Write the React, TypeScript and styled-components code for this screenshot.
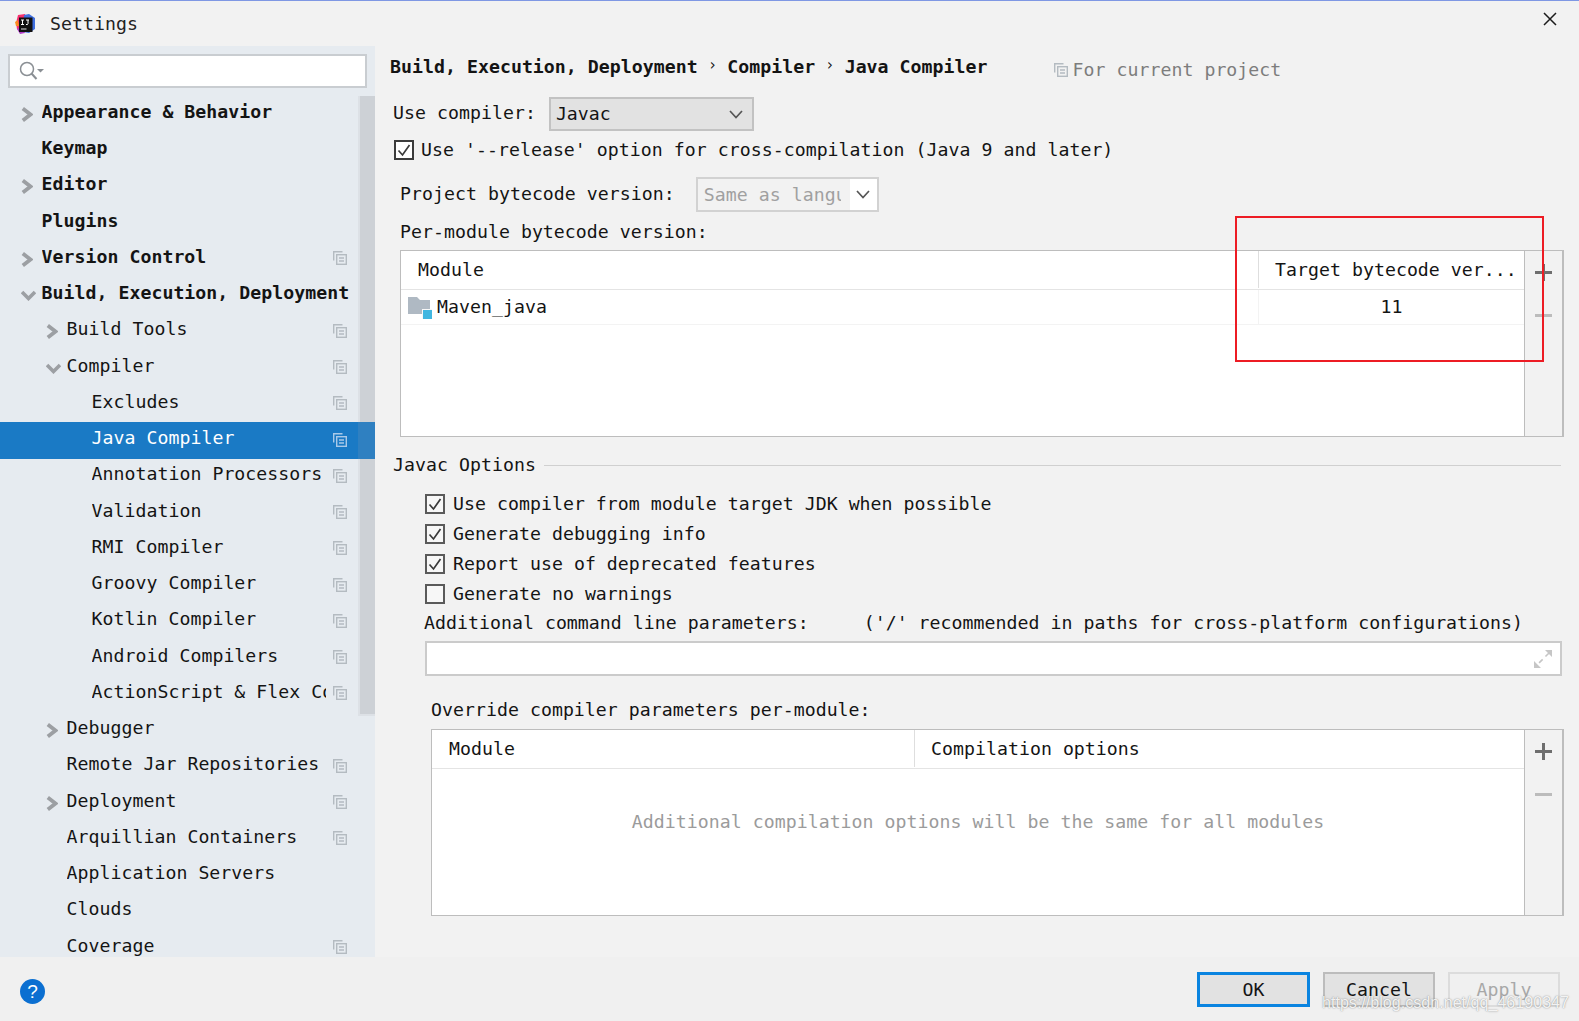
import React from 'react';
import styled, { createGlobalStyle } from 'styled-components';

const Global = createGlobalStyle`
    html, body {
        margin: 0;
        padding: 0;
        background: #f2f2f2;
    }
    * {
        box-sizing: border-box;
    }
`;

const Window = styled.div`
    position: relative;
    width: 1579px;
    height: 1021px;
    display: flex;
    flex-direction: column;
    overflow: hidden;
    background: #f2f2f2;
    color: #141414;
    font-family: "DejaVu Sans Mono", "Liberation Mono", monospace;
    font-size: 18.2px;
    line-height: 20px;
    letter-spacing: 0.04px;
    white-space: pre;
`;

const TitleBar = styled.div`
    height: 46px;
    flex: none;
    display: flex;
    align-items: center;
    border-top: 1px solid #7f98e4;
    padding: 0 22px 0 15px;
`;

const Title = styled.div`
    margin-left: 15px;
    flex: 1;
    color: #222;
`;

const Body = styled.div`
    flex: 1;
    display: flex;
    min-height: 0;
`;

const Sidebar = styled.div`
    width: 375px;
    flex: none;
    display: flex;
    flex-direction: column;
    background: #e6ebf0;
    overflow: hidden;
`;

const SearchBox = styled.div`
    margin: 8px 8px 8px;
    width: 359px;
    height: 34px;
    flex: none;
    display: flex;
    align-items: center;
    padding-left: 9px;
    background: #fff;
    border: 2px solid #c9cdd1;
`;

const Tree = styled.div`
    position: relative;
    flex: 1;
    min-height: 0;
`;

const ScrollThumb = styled.div`
    position: absolute;
    top: 0;
    left: 358px;
    width: 17px;
    height: 620px;
    background: #cdd1d6;
    border-left: 2px solid #dde1e6;
    border-bottom: 2px solid #dde1e6;
`;

const Row = styled.div<{ $level: number; $selected?: boolean }>`
    position: relative;
    height: 36.25px;
    display: flex;
    align-items: center;
    padding: 0 20px 4.5px ${({ $level }) => 20 + $level * 25}px;
    background: ${({ $selected }) =>
        $selected ? 'linear-gradient(to right, #1a7ac5 358px, #2f80c1 358px)' : 'transparent'};
    color: ${({ $selected }) => ($selected ? '#fff' : '#141414')};
    z-index: ${({ $selected }) => ($selected ? 1 : 0)};
`;

const ArrowSlot = styled.div`
    width: 21.5px;
    flex: none;
    display: flex;
    align-items: center;
    margin-top: 5px;
    padding-left: 1px;
`;

const RowLabel = styled.div<{ $bold?: boolean }>`
    flex: 1;
    min-width: 0;
    overflow: hidden;
    font-weight: ${({ $bold }) => ($bold ? 700 : 400)};
`;

const RowIcon = styled.div`
    width: 14px;
    flex: none;
    margin: 3px 8px 0 7px;
    display: flex;
`;

const Main = styled.div`
    flex: 1;
    min-width: 0;
    display: flex;
    flex-direction: column;
    padding-left: 15px;
`;

const Crumbs = styled.div`
    height: 42px;
    flex: none;
    display: flex;
    align-items: center;
    padding-bottom: 1px;
    font-weight: 700;
`;

const CrumbSep = styled.span`
    font-weight: 400;
    font-size: 15px;
    width: 29.5px;
    text-align: center;
    margin-top: -3px;
`;

const ProjectNote = styled.div`
    margin: 7px 0 0 66px;
    display: flex;
    align-items: center;
    gap: 5px;
    font-weight: 400;
    color: #7d7d7d;
`;

const FieldRow = styled.div<{ $top: number; $left: number }>`
    display: flex;
    align-items: center;
    flex: none;
    margin-top: ${({ $top }) => $top}px;
    margin-left: ${({ $left }) => $left}px;
`;

const FieldLabel = styled.span<{ $lift?: number }>`
    margin-bottom: ${({ $lift }) => $lift ?? 0}px;
`;

const Combo = styled.div<{ $w: number; $light?: boolean }>`
    width: ${({ $w }) => $w}px;
    height: ${({ $light }) => ($light ? 35 : 34)}px;
    margin-left: ${({ $light }) => ($light ? 21 : 13)}px;
    display: flex;
    align-items: center;
    border: 2px solid ${({ $light }) => ($light ? '#d2d2d2' : '#c2c2c2')};
    background: ${({ $light }) => ($light ? '#fff' : '#e2e2e2')};
    color: ${({ $light }) => ($light ? '#a0a0a0' : '#141414')};
`;

const ComboText = styled.div<{ $light?: boolean }>`
    flex: 1;
    min-width: 0;
    height: 100%;
    display: flex;
    align-items: center;
    padding-left: ${({ $light }) => ($light ? 6 : 5)}px;
    background: ${({ $light }) => ($light ? '#f2f2f2' : 'transparent')};
`;

const ComboClip = styled.div<{ $light?: boolean }>`
    flex: 1;
    min-width: 0;
    overflow: hidden;
    margin-right: ${({ $light }) => ($light ? 9 : 0)}px;
`;

const ComboArrow = styled.div<{ $light?: boolean }>`
    width: ${({ $light }) => ($light ? 27 : 32)}px;
    flex: none;
    display: flex;
    justify-content: center;
`;

const ReleaseRow = styled(FieldRow)`
    gap: 7px;
`;

const Box = styled.div<{ $dark?: boolean }>`
    width: 20px;
    height: 20px;
    flex: none;
    display: flex;
    align-items: center;
    justify-content: center;
    background: ${({ $dark }) => ($dark ? '#fff' : '#f7f7f7')};
    border: 2px solid ${({ $dark }) => ($dark ? '#3c3c3c' : '#5a5a5a')};
`;

const CheckList = styled.div`
    margin-top: 14px;
    flex: none;
`;

const CheckRow = styled.div`
    height: 30px;
    display: flex;
    align-items: center;
    gap: 8px;
    margin-left: 35px;
`;

const TableFrame = styled.div<{ $left: number; $top: number }>`
    width: ${({ $left }) => 1164 - ($left - 10)}px;
    height: 187px;
    flex: none;
    margin-left: ${({ $left }) => $left}px;
    margin-top: ${({ $top }) => $top}px;
    display: flex;
    border: 1.5px solid #bdbdbd;
    border-right-width: 2px;
`;

const TableBody = styled.div`
    flex: 1;
    min-width: 0;
    display: flex;
    flex-direction: column;
    background: #fff;
`;

const TableHead = styled.div`
    height: 39px;
    flex: none;
    display: flex;
    align-items: flex-start;
    border-bottom: 1px solid #e4e4e4;
`;

const HeadCell = styled.div<{ $w?: number; $divider?: boolean }>`
    ${({ $w }) => ($w ? `width: ${$w}px;` : 'flex: 1;')}
    height: 37px;
    display: flex;
    align-items: center;
    padding-left: ${({ $divider }) => ($divider ? 16 : 17)}px;
    border-left: ${({ $divider }) => ($divider ? '1px solid #dedede' : 'none')};
`;

const DataRow = styled.div`
    height: 35px;
    flex: none;
    display: flex;
    align-items: center;
    border-bottom: 1px solid #f3f3f3;
`;

const ModuleCell = styled.div`
    flex: 1;
    display: flex;
    align-items: center;
    gap: 5px;
    padding-left: 7px;
`;

const ValueCell = styled.div`
    width: 266px;
    height: 100%;
    display: flex;
    align-items: center;
    justify-content: center;
    border-left: 1px solid #f3f3f3;
`;

const EmptyNote = styled.div`
    flex: 1;
    display: flex;
    align-items: center;
    justify-content: center;
    padding-bottom: 40px;
    color: #9b9b9b;
`;

const TableTools = styled.div`
    width: 38px;
    flex: none;
    display: flex;
    flex-direction: column;
    align-items: center;
    gap: 26px;
    padding-top: 13px;
    border-left: 1.5px solid #bdbdbd;
`;

const ToolMark = styled.svg`
    display: block;
`;

const GroupTitle = styled.div`
    margin-top: 18px;
    height: 20px;
    flex: none;
    display: flex;
    align-items: center;
    gap: 8px;
    margin-left: 3px;
    margin-right: 18px;
`;

const GroupLine = styled.div`
    flex: 1;
    height: 1px;
    background: #d0d0d0;
`;

const Hint = styled.span`
    margin-left: 55px;
`;

const TextInput = styled.div`
    margin: 8px 17px 0 35px;
    height: 35px;
    flex: none;
    display: flex;
    align-items: center;
    justify-content: flex-end;
    padding-right: 7px;
    background: #fff;
    border: 2px solid #cbcbcb;
`;

const Footer = styled.div`
    height: 64px;
    flex: none;
    display: flex;
    align-items: flex-start;
    background: #f0f0f0;
    padding: 15px 19px 0 20px;
`;

const Help = styled.div`
    width: 25px;
    height: 25px;
    margin-top: 7px;
    border-radius: 50%;
    background: #0b6fd1;
    color: #fff;
    display: flex;
    align-items: center;
    justify-content: center;
    font-family: "Liberation Sans", sans-serif;
    font-size: 19px;
`;

const Buttons = styled.div`
    margin-left: auto;
    display: flex;
    gap: 13px;
`;

const Button = styled.div<{ $kind: 'default' | 'plain' | 'off' }>`
    width: ${({ $kind }) => ($kind === 'default' ? 113 : 112)}px;
    height: 35px;
    display: flex;
    align-items: center;
    justify-content: center;
    background: ${({ $kind }) => ($kind === 'off' ? '#f0f0f0' : '#e2e2e2')};
    color: ${({ $kind }) => ($kind === 'off' ? '#a8a8a8' : '#141414')};
    border: ${({ $kind }) =>
        $kind === 'default' ? '3px solid #0a84e0' : $kind === 'plain' ? '2px solid #bcbcbc' : '2px solid #dcdcdc'};
`;

const Watermark = styled.div`
    position: absolute;
    right: 10px;
    bottom: 9px;
    font-family: "Liberation Sans", sans-serif;
    font-size: 16.1px;
    letter-spacing: 0;
    color: rgba(255, 255, 255, 0.9);
    text-shadow: 0 0 1.5px rgba(90, 90, 90, 0.8);
`;

const RedFrame = styled.div`
    position: absolute;
    left: 1235px;
    top: 216px;
    width: 309px;
    height: 146px;
    border: 2px solid #ed1c24;
`;

const CloseGlyph = styled.svg`
    margin-top: -10px;
`;

const Logo = () => (
    <svg width="20" height="20" viewBox="0 0 20 20">
        <path d="M1 9 L3 1 L10 0 L12 6 L6 18 L2 15 Z" fill="#f5316f" />
        <path d="M0 8 L3 6 L4 12 L1 12 Z" fill="#fb8c1f" />
        <path d="M9 1 L14 0 L20 4 L20 15 L14 19 L8 18 Z" fill="#3f6fe0" />
        <path d="M2 15 L7 12 L10 19 L5 20 Z" fill="#b03ac8" />
        <rect x="4" y="3.5" width="13.5" height="14.5" fill="#111" />
        <path d="M6 6 H9 M7.5 6 V10.5 M6 10.5 H9 M11 6 H14 M13 6 V9.5 Q13 11 11 10.5" stroke="#fff" strokeWidth="1" fill="none" />
        <rect x="6" y="14.5" width="5.5" height="1" fill="#ddd" />
    </svg>
);

const CloseIcon = () => (
    <CloseGlyph width="14" height="14" viewBox="0 0 14 14">
        <path d="M1 1 L13 13 M13 1 L1 13" stroke="#1c1c1c" strokeWidth="1.5" />
    </CloseGlyph>
);

const SearchIcon = () => (
    <svg width="26" height="20" viewBox="0 0 26 20">
        <circle cx="8" cy="8" r="6.5" fill="none" stroke="#8a8f94" strokeWidth="1.5" />
        <path d="M12.5 12.5 L17.5 18" stroke="#8a8f94" strokeWidth="2" />
        <path d="M18 8 H25 L21.5 11.5 Z" fill="#8a8f94" />
    </svg>
);

const ChevronRight = () => (
    <svg width="12" height="15" viewBox="0 0 12 15">
        <path d="M1.8 1.6 L9.5 7.5 L1.8 13.4" fill="none" stroke="#9c9fa3" strokeWidth="3.8" />
    </svg>
);

const ChevronDown = () => (
    <svg width="15" height="11" viewBox="0 0 15 11">
        <path d="M1 2 L7.5 8.5 L14 2" fill="none" stroke="#9c9fa3" strokeWidth="3.6" />
    </svg>
);

const ComboChevron = () => (
    <svg width="14" height="9" viewBox="0 0 14 9">
        <path d="M1 1 L7 7.5 L13 1" fill="none" stroke="#555" strokeWidth="1.7" />
    </svg>
);

const SheetIcon = ({ color = '#b4bbc1' }: { color?: string }) => (
    <svg width="14" height="14" viewBox="0 0 14 14">
        <path d="M0.7 9.5 V0.7 H9.5" fill="none" stroke={color} strokeWidth="1.4" />
        <rect x="3.7" y="3.7" width="9.6" height="9.6" fill="none" stroke={color} strokeWidth="1.4" />
        <path d="M6 7 H11 M6 10 H11" stroke={color} strokeWidth="1.4" />
    </svg>
);

const Check = () => (
    <svg width="14" height="14" viewBox="0 0 14 14">
        <path d="M1.5 7.5 L5.5 12 L12.5 2" fill="none" stroke="#3a3a3a" strokeWidth="1.7" />
    </svg>
);

const ModuleIcon = () => (
    <svg width="24" height="23" viewBox="0 0 24 23">
        <path d="M0 1 H9 L12 4 H22 V18 H0 Z" fill="#afb9c3" />
        <rect x="14" y="13" width="10" height="10" fill="#f7f7f7" />
        <rect x="15" y="14" width="9" height="9" fill="#40b6e0" />
    </svg>
);

const PlusIcon = () => (
    <ToolMark width="17" height="17" viewBox="0 0 17 17">
        <path d="M0 8.5 H17 M8.5 0 V17" stroke="#6e6e6e" strokeWidth="3" />
    </ToolMark>
);

const MinusIcon = () => (
    <ToolMark width="17" height="17" viewBox="0 0 17 17">
        <path d="M0 8.5 H17" stroke="#bcbcbc" strokeWidth="3" />
    </ToolMark>
);

const ExpandIcon = () => (
    <svg width="20" height="20" viewBox="0 0 20 20">
        <path d="M12 1 H19 V8 Z M1 12 V19 H8 Z" fill="#c6c6c6" />
        <path d="M16 4 L4 16" stroke="#c6c6c6" strokeWidth="1.6" strokeDasharray="5 4" />
    </svg>
);

interface TreeItem {
    label: string;
    level: number;
    arrow?: 'right' | 'down';
    bold?: boolean;
    icon?: boolean;
    selected?: boolean;
}

const tree_items: TreeItem[] = [
    { label: 'Appearance & Behavior', level: 0, arrow: 'right', bold: true },
    { label: 'Keymap', level: 0, bold: true },
    { label: 'Editor', level: 0, arrow: 'right', bold: true },
    { label: 'Plugins', level: 0, bold: true },
    { label: 'Version Control', level: 0, arrow: 'right', bold: true, icon: true },
    { label: 'Build, Execution, Deployment', level: 0, arrow: 'down', bold: true },
    { label: 'Build Tools', level: 1, arrow: 'right', icon: true },
    { label: 'Compiler', level: 1, arrow: 'down', icon: true },
    { label: 'Excludes', level: 2, icon: true },
    { label: 'Java Compiler', level: 2, icon: true, selected: true },
    { label: 'Annotation Processors', level: 2, icon: true },
    { label: 'Validation', level: 2, icon: true },
    { label: 'RMI Compiler', level: 2, icon: true },
    { label: 'Groovy Compiler', level: 2, icon: true },
    { label: 'Kotlin Compiler', level: 2, icon: true },
    { label: 'Android Compilers', level: 2, icon: true },
    { label: 'ActionScript & Flex Compiler', level: 2, icon: true },
    { label: 'Debugger', level: 1, arrow: 'right' },
    { label: 'Remote Jar Repositories', level: 1, icon: true },
    { label: 'Deployment', level: 1, arrow: 'right', icon: true },
    { label: 'Arquillian Containers', level: 1, icon: true },
    { label: 'Application Servers', level: 1 },
    { label: 'Clouds', level: 1 },
    { label: 'Coverage', level: 1, icon: true },
];

const javac_options = [
    { label: 'Use compiler from module target JDK when possible', checked: true },
    { label: 'Generate debugging info', checked: true },
    { label: 'Report use of deprecated features', checked: true },
    { label: 'Generate no warnings', checked: false },
];

const App: React.FC = () => {
    return (
        <Window>
            <Global />
            <TitleBar>
                <Logo />
                <Title>Settings</Title>
                <CloseIcon />
            </TitleBar>
            <Body>
                <Sidebar>
                    <SearchBox>
                        <SearchIcon />
                    </SearchBox>
                    <Tree>
                        <ScrollThumb />
                        {tree_items.map((item) => (
                            <Row key={item.label} $level={item.level} $selected={item.selected}>
                                <ArrowSlot>
                                    {item.arrow === 'right' && <ChevronRight />}
                                    {item.arrow === 'down' && <ChevronDown />}
                                </ArrowSlot>
                                <RowLabel $bold={item.bold}>{item.label}</RowLabel>
                                {item.icon && (
                                    <RowIcon>
                                        <SheetIcon color={item.selected ? '#a9c9e8' : undefined} />
                                    </RowIcon>
                                )}
                            </Row>
                        ))}
                    </Tree>
                </Sidebar>
                <Main>
                    <Crumbs>
                        Build, Execution, Deployment
                        <CrumbSep>›</CrumbSep>
                        Compiler
                        <CrumbSep>›</CrumbSep>
                        Java Compiler
                        <ProjectNote>
                            <SheetIcon />
                            For current project
                        </ProjectNote>
                    </Crumbs>
                    <FieldRow $top={9} $left={3}>
                        <FieldLabel $lift={2}>Use compiler:</FieldLabel>
                        <Combo $w={205}>
                            <ComboText>
                                <ComboClip>Javac</ComboClip>
                            </ComboText>
                            <ComboArrow>
                                <ComboChevron />
                            </ComboArrow>
                        </Combo>
                    </FieldRow>
                    <ReleaseRow $top={9} $left={4}>
                        <Box $dark>
                            <Check />
                        </Box>
                        <span>Use '--release' option for cross-compilation (Java 9 and later)</span>
                    </ReleaseRow>
                    <FieldRow $top={17} $left={10}>
                        <FieldLabel $lift={1}>Project bytecode version:</FieldLabel>
                        <Combo $w={183} $light>
                            <ComboText $light>
                                <ComboClip $light>Same as language</ComboClip>
                            </ComboText>
                            <ComboArrow $light>
                                <ComboChevron />
                            </ComboArrow>
                        </Combo>
                    </FieldRow>
                    <FieldRow $top={10} $left={10}>
                        <FieldLabel>Per-module bytecode version:</FieldLabel>
                    </FieldRow>
                    <TableFrame $left={10} $top={8}>
                        <TableBody>
                            <TableHead>
                                <HeadCell>Module</HeadCell>
                                <HeadCell $w={266} $divider>
                                    Target bytecode ver...
                                </HeadCell>
                            </TableHead>
                            <DataRow>
                                <ModuleCell>
                                    <ModuleIcon />
                                    Maven_java
                                </ModuleCell>
                                <ValueCell>11</ValueCell>
                            </DataRow>
                        </TableBody>
                        <TableTools>
                            <PlusIcon />
                            <MinusIcon />
                        </TableTools>
                    </TableFrame>
                    <GroupTitle>
                        Javac Options
                        <GroupLine />
                    </GroupTitle>
                    <CheckList>
                        {javac_options.map((option) => (
                            <CheckRow key={option.label}>
                                <Box>{option.checked && <Check />}</Box>
                                {option.label}
                            </CheckRow>
                        ))}
                    </CheckList>
                    <FieldRow $top={4} $left={34}>
                        <FieldLabel>Additional command line parameters:</FieldLabel>
                        <Hint>('/' recommended in paths for cross-platform configurations)</Hint>
                    </FieldRow>
                    <TextInput>
                        <ExpandIcon />
                    </TextInput>
                    <FieldRow $top={24} $left={41}>
                        <FieldLabel>Override compiler parameters per-module:</FieldLabel>
                    </FieldRow>
                    <TableFrame $left={41} $top={9}>
                        <TableBody>
                            <TableHead>
                                <HeadCell $w={482}>Module</HeadCell>
                                <HeadCell $divider>Compilation options</HeadCell>
                            </TableHead>
                            <EmptyNote>Additional compilation options will be the same for all modules</EmptyNote>
                        </TableBody>
                        <TableTools>
                            <PlusIcon />
                            <MinusIcon />
                        </TableTools>
                    </TableFrame>
                </Main>
            </Body>
            <Footer>
                <Help>?</Help>
                <Buttons>
                    <Button $kind="default">OK</Button>
                    <Button $kind="plain">Cancel</Button>
                    <Button $kind="off">Apply</Button>
                </Buttons>
            </Footer>
            <RedFrame />
            <Watermark>https://blog.csdn.net/qq_46190347</Watermark>
        </Window>
    );
};

export default App;
